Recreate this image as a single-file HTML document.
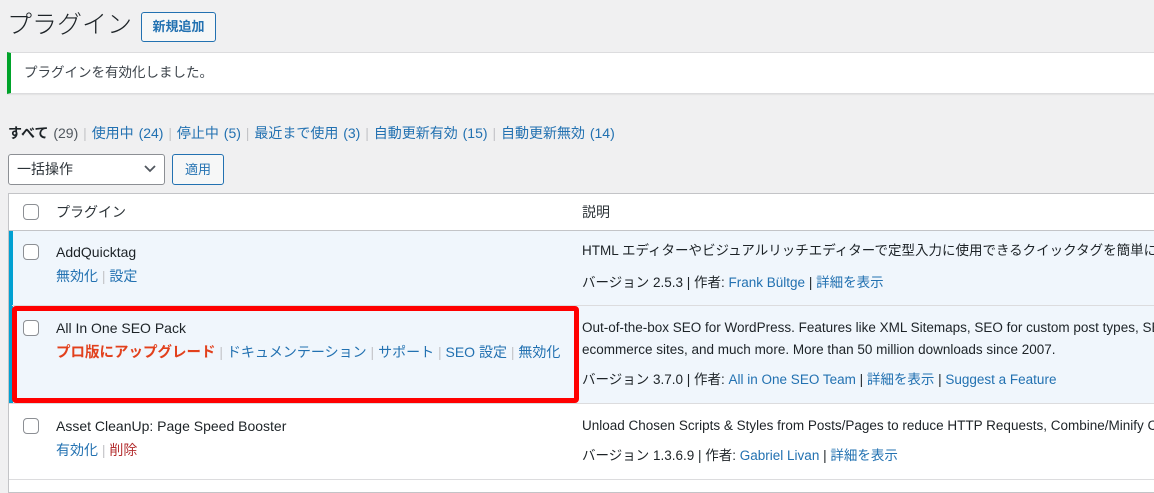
<!DOCTYPE html>
<html><head><meta charset="utf-8"><style>
*{margin:0;padding:0;box-sizing:border-box}
body{width:1154px;height:484px;overflow:hidden;background:#f0f0f1;font-family:"Liberation Sans","Noto Sans CJK JP",sans-serif;color:#1d2327;font-size:13px;position:relative}
.a{position:absolute;white-space:nowrap;line-height:20px}
a,.l{color:#2271b1;text-decoration:none}
.s{color:#c3c4c7}
.cb{position:absolute;width:16px;height:16px;border:1px solid #8c8f94;border-radius:4px;background:#fff;left:23px}
</style></head><body>
<div class="a" style="left:7px;top:8px;font-size:25px;line-height:34px;color:#1d2327;font-weight:300">プラグイン</div>
<div class="a" style="left:141px;top:12px;width:75px;height:30px;border:1px solid #2271b1;border-radius:3px;background:#f6f7f7;color:#2271b1;font-weight:bold;font-size:13px;line-height:28px;text-align:center">新規追加</div>
<div style="position:absolute;left:7px;top:52px;width:1150px;height:42px;background:#fff;border-left:4px solid #00a32a;box-shadow:0 1px 1px rgba(0,0,0,.06);border-top:1px solid #dcdcde;border-bottom:1px solid #dcdcde"></div>
<div class="a" style="left:24px;top:63px;color:#3c434a;font-size:13.5px">プラグインを有効化しました。</div>
<div class="a" style="left:8px;top:123px;color:#50575e;font-size:14px;word-spacing:1px"><b style="color:#1d2327">すべて</b> (29) <span class="s">|</span> <span class="l">使用中 (24)</span> <span class="s">|</span> <span class="l">停止中 (5)</span> <span class="s">|</span> <span class="l">最近まで使用 (3)</span> <span class="s">|</span> <span class="l">自動更新有効 (15)</span> <span class="s">|</span> <span class="l">自動更新無効 (14)</span></div>
<div class="a" style="left:8px;top:154px;width:157px;height:31px;border:1px solid #8c8f94;border-radius:3px;background:#fff;padding-left:8px;line-height:29px;font-size:14px;color:#2c3338">一括操作<svg style="position:absolute;right:8px;top:10px" width="12" height="8" viewBox="0 0 12 8"><path d="M1 1l5 5 5-5" stroke="#50575e" stroke-width="1.8" fill="none"/></svg></div>
<div class="a" style="left:172px;top:154px;width:52px;height:31px;border:1px solid #2271b1;border-radius:3px;background:#f6f7f7;color:#2271b1;line-height:29px;text-align:center;font-size:13px">適用</div>
<div style="position:absolute;left:8px;top:193px;width:1150px;height:300px;background:#fff;border:1px solid #c3c4c7"></div>
<div style="position:absolute;left:9px;top:230px;width:1150px;height:1px;background:#c3c4c7"></div>
<div class="cb" style="top:204px"></div>
<div class="a" style="left:56px;top:202px;font-size:14px;color:#2c3338">プラグイン</div>
<div class="a" style="left:582px;top:202px;font-size:14px;color:#2c3338">説明</div>
<div style="position:absolute;left:9px;top:231px;width:1150px;height:172px;background:#f0f6fc"></div>
<div style="position:absolute;left:9px;top:231px;width:1150px;height:172px;border-left:4px solid #00a0d2"></div>
<div style="position:absolute;left:12px;top:305px;width:1150px;height:1px;background:#dcdcde"></div>
<div style="position:absolute;left:9px;top:403px;width:1150px;height:1px;background:#dcdcde"></div>
<div style="position:absolute;left:9px;top:479px;width:1150px;height:1px;background:#dcdcde"></div>
<div class="cb" style="top:244px"></div>
<div class="a" style="left:56px;top:242px;font-size:14px">AddQuicktag</div>
<div class="a" style="left:56px;top:266px;font-size:14px"><span class="l">無効化</span> <span class="s">|</span> <span class="l">設定</span></div>
<div class="a" style="left:582px;top:241px;font-size:13.5px">HTML エディターやビジュアルリッチエディターで定型入力に使用できるクイックタグを簡単に</div>
<div class="a" style="left:582px;top:273px;font-size:13.5px">バージョン 2.5.3 | 作者: <span class="l">Frank Bültge</span> | <span class="l">詳細を表示</span></div>
<div class="cb" style="top:320px"></div>
<div class="a" style="left:56px;top:318px;font-size:14px">All In One SEO Pack</div>
<div class="a" style="left:56px;top:342px;font-size:14px"><b style="color:#e2401c;font-size:14.5px">プロ版にアップグレード</b> <span class="s">|</span> <span class="l">ドキュメンテーション</span> <span class="s">|</span> <span class="l">サポート</span> <span class="s">|</span> <span class="l">SEO 設定</span> <span class="s">|</span> <span class="l">無効化</span></div>
<div class="a" style="left:582px;top:318px;font-size:13.5px">Out-of-the-box SEO for WordPress. Features like XML Sitemaps, SEO for custom post types, SEO for</div>
<div class="a" style="left:582px;top:340px;font-size:13.5px">ecommerce sites, and much more. More than 50 million downloads since 2007.</div>
<div class="a" style="left:582px;top:370px;font-size:13.5px">バージョン 3.7.0 | 作者: <span class="l">All in One SEO Team</span> | <span class="l">詳細を表示</span> | <span class="l">Suggest a Feature</span></div>
<div style="position:absolute;left:12px;top:306px;width:567px;height:97px;border:5px solid #f00;border-radius:4px"></div>
<div class="cb" style="top:418px"></div>
<div class="a" style="left:56px;top:416px;font-size:14px">Asset CleanUp: Page Speed Booster</div>
<div class="a" style="left:56px;top:440px;font-size:14px"><span class="l">有効化</span> <span class="s">|</span> <span style="color:#b32d2e">削除</span></div>
<div class="a" style="left:582px;top:416px;font-size:13.5px">Unload Chosen Scripts &amp; Styles from Posts/Pages to reduce HTTP Requests, Combine/Minify CSS</div>
<div class="a" style="left:582px;top:446px;font-size:13.5px">バージョン 1.3.6.9 | 作者: <span class="l">Gabriel Livan</span> | <span class="l">詳細を表示</span></div>
</body></html>
